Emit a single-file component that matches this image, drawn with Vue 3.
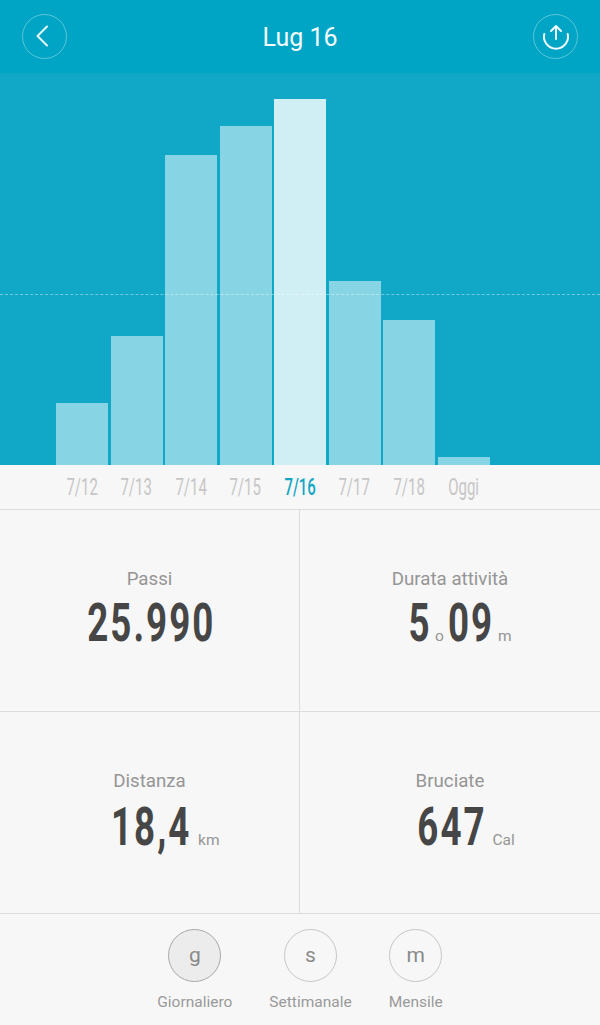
<script setup>
const bars = [
  { h: 62 }, { h: 129 }, { h: 310 }, { h: 339 },
  { h: 366, on: true }, { h: 184 }, { h: 145 }, { h: 8 }
]
const labels = [
  { t: '7/12' }, { t: '7/13' }, { t: '7/14' }, { t: '7/15' },
  { t: '7/16', on: true }, { t: '7/17' }, { t: '7/18' }, { t: 'Oggi' }
]
const modes = [
  { k: 'g', t: 'Giornaliero', on: true },
  { k: 's', t: 'Settimanale' },
  { k: 'm', t: 'Mensile' }
]
</script>

<template>
  <div class="page">
    <header class="top">
      <button class="round">
        <svg width="43" height="43" viewBox="0 0 43 43" fill="none">
          <path d="M24 11.5 L14.500 21 L24 30.500" stroke="#e6f7fb" stroke-width="2" stroke-linecap="round" stroke-linejoin="round" />
        </svg>
      </button>
      <h1 class="title">Lug 16</h1>
      <button class="round">
        <svg width="43" height="43" viewBox="0 0 43 43" fill="none" stroke="#eefafc" stroke-width="2" stroke-linecap="round" stroke-linejoin="round">
          <path d="M10.300 19 A12 12 0 1 0 33.700 19" />
          <path d="M22 24 V11 M17 16 L22 11 L27 16" />
        </svg>
      </button>
    </header>

    <section class="chart">
      <div class="dash"></div>
      <div v-for="(b, i) in bars" :key="i" class="bar" :class="{ on: b.on }" :style="{ height: b.h + 'px' }"></div>
    </section>

    <nav class="days">
      <span v-for="l in labels" :key="l.t" class="day" :class="{ on: l.on }"><i>{{ l.t }}</i></span>
    </nav>

    <section class="stats">
      <div class="cell">
        <div class="name">Passi</div>
        <div class="val"><b class="num n0">25.990</b></div>
      </div>
      <div class="cell">
        <div class="name">Durata attività</div>
        <div class="val"><b class="num n1">5</b><small class="o">o</small><b class="num n2">09</b><small class="unit m">m</small></div>
      </div>
      <div class="cell low">
        <div class="name">Distanza</div>
        <div class="val"><b class="num n3">18,4</b><small class="unit km">km</small></div>
      </div>
      <div class="cell low">
        <div class="name">Bruciate</div>
        <div class="val"><b class="num n4">647</b><small class="unit cal">Cal</small></div>
      </div>
    </section>

    <footer class="modes">
      <div v-for="m in modes" :key="m.k" class="mode">
        <span class="circle" :class="{ on: m.on }">{{ m.k }}</span>
        <span class="cap">{{ m.t }}</span>
      </div>
    </footer>
  </div>
</template>

<style>
html, body { margin: 0; background: #f7f7f7; }
</style>

<style scoped>
.page {
  width: 600px;
  height: 1025px;
  overflow: hidden;
  background: #f7f7f7;
  font-family: Roboto, "Liberation Sans", sans-serif;
}
.top {
  height: 73px;
  box-sizing: border-box;
  padding: 14px 22px 0 22px;
  display: flex;
  justify-content: space-between;
  align-items: flex-start;
  background: #00a5c5;
}
.round {
  width: 45px;
  height: 45px;
  padding: 0;
  border: 1px solid rgba(255, 255, 255, 0.35);
  border-radius: 50%;
  background: none;
  box-sizing: border-box;
  display: flex;
  align-items: center;
  justify-content: center;
}
.title {
  margin: 8px 0 0;
  font-size: 25px;
  line-height: 32px;
  font-weight: 400;
  color: #f4fcfd;
}
.chart {
  position: relative;
  height: 392px;
  box-sizing: border-box;
  padding-left: 56px;
  display: flex;
  align-items: flex-end;
  gap: 2.5px;
  background: #10a8c6;
}
.dash {
  position: absolute;
  left: 0;
  right: 0;
  top: 221px;
  border-top: 1px dashed rgba(255, 255, 255, 0.4);
}
.bar {
  flex: 0 0 52px;
  background: #87d4e4;
}
.bar.on {
  background: #cfeff5;
}
.days {
  height: 45px;
  box-sizing: border-box;
  padding-left: 56px;
  display: flex;
  gap: 2.5px;
  border-bottom: 1px solid #dcdcdc;
}
.day {
  flex: 0 0 52px;
  display: flex;
  justify-content: center;
  line-height: 45px;
  font-size: 23px;
  color: #c6c6c6;
}
.day i {
  display: inline-block;
  font-style: normal;
  transform: scaleX(0.65);
  white-space: nowrap;
}
.day.on {
  color: #13a6c4;
  font-weight: 500;
}
.stats {
  display: grid;
  grid-template-columns: 300px 1fr;
  grid-template-rows: 202px 202px;
}
.cell {
  box-sizing: border-box;
  border-bottom: 1px solid #dcdcdc;
  text-align: center;
  padding-top: 59px;
}
.cell:nth-child(odd) {
  border-right: 1px solid #dcdcdc;
}
.name {
  font-size: 18.7px;
  line-height: 21px;
  color: #959595;
}
.val {
  height: 58px;
  margin-top: 4px;
  padding-left: 3px;
  color: #464646;
  display: flex;
  justify-content: center;
  align-items: baseline;
  white-space: nowrap;
}
.low .val {
  margin-top: 6px;
}
.num {
  display: inline-block;
  font-size: 54px;
  line-height: 58px;
  font-weight: 700;
  letter-spacing: 3px;
  transform: scaleX(0.68);
  transform-origin: center;
}
.n0 { margin: 0 -29px; }
.n1 { margin: 0 -5px; }
.n2 { margin: 0 -10px; }
.n3 { margin: 0 -18px; }
.n4 { margin: 0 -15px; }
small {
  font-size: 15.5px;
  color: #959595;
}
.unit {
  width: 0;
}
.o { margin: 0 3px; }
.m { margin: 0 -3px 0 3px; }
.km { margin: 0 -6px 0 6px; }
.cal { margin: 0 -5px 0 5px; }
.modes {
  display: flex;
  justify-content: center;
  gap: 37px;
  padding-top: 15px;
}
.mode {
  display: flex;
  flex-direction: column;
  align-items: center;
}
.circle {
  width: 53px;
  height: 53px;
  box-sizing: border-box;
  border: 1px solid #c6c6c6;
  border-radius: 50%;
  display: flex;
  align-items: center;
  justify-content: center;
  font-size: 21px;
  color: #8a8a8a;
  padding-bottom: 2px;
}
.circle.on {
  background: #ececec;
  border-color: #a8a8a8;
}
.cap {
  margin-top: 11px;
  font-size: 15.5px;
  line-height: 18px;
  color: #9a9a9a;
  white-space: nowrap;
}
</style>
